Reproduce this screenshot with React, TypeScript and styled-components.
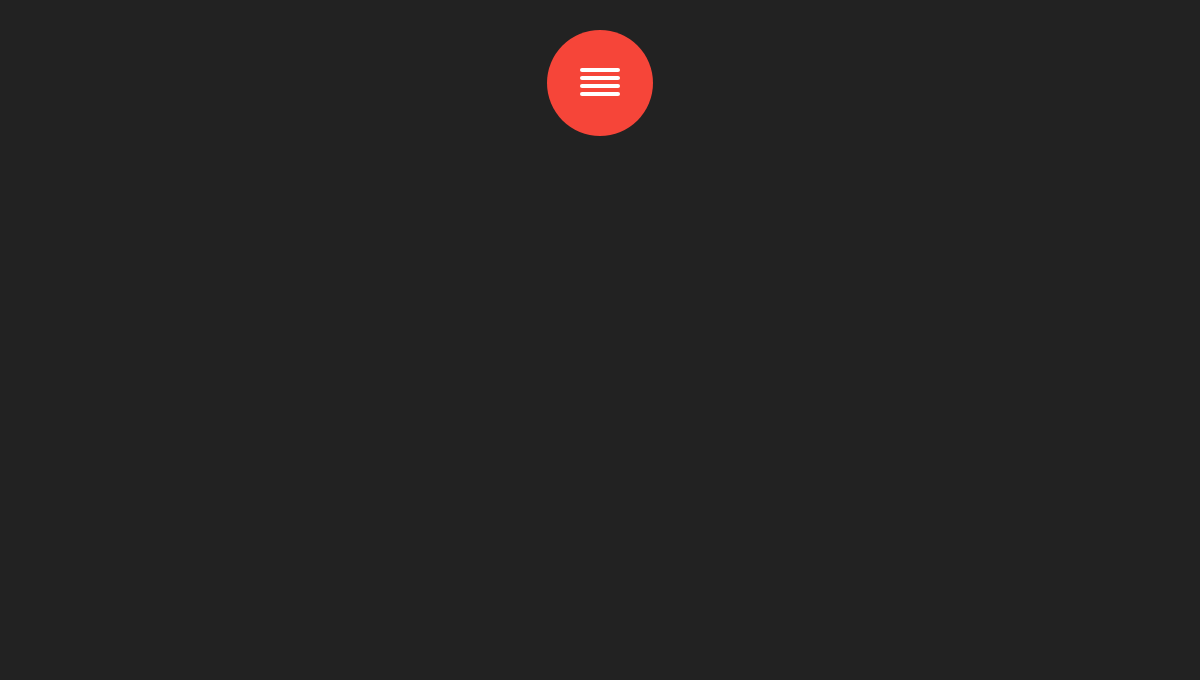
import React from "react";
import styled, { createGlobalStyle } from "styled-components";

const Global = createGlobalStyle`
  html, body { margin: 0; padding: 0; background: #222222; height: 100%; }
  #root { min-height: 100vh; }
`;

const Page = styled.div`
  min-height: 100vh;
  background: #222222;
  display: flex;
  justify-content: center;
  align-items: flex-start;
  padding-top: 30px;
  box-sizing: border-box;
`;

const MenuButton = styled.button`
  width: 106px;
  height: 106px;
  border-radius: 50%;
  border: none;
  padding: 0 0 2px 0;
  box-sizing: border-box;
  background: #f64539;
  display: flex;
  flex-direction: column;
  align-items: center;
  justify-content: center;
  gap: 4px;
  cursor: pointer;
`;

const Bar = styled.span`
  display: block;
  width: 40px;
  height: 4px;
  border-radius: 2px;
  background: #ffffff;
`;

export default function App() {
  return (
    <>
      <Global />
      <Page>
        <MenuButton aria-label="Menu">
          <Bar />
          <Bar />
          <Bar />
          <Bar />
        </MenuButton>
      </Page>
    </>
  );
}
